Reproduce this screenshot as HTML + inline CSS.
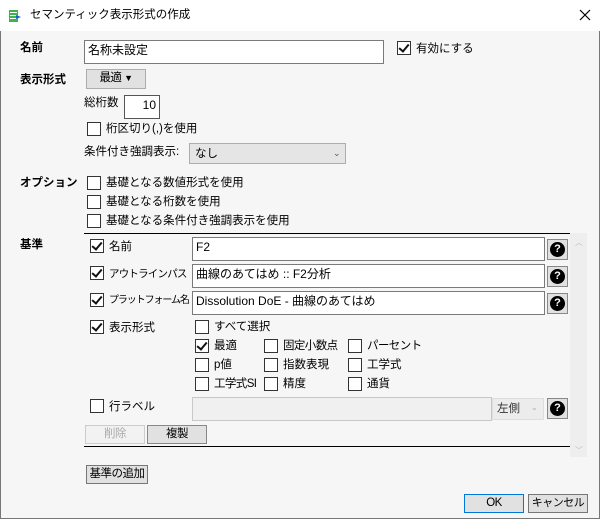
<!DOCTYPE html>
<html><head><meta charset="utf-8"><style>
*{box-sizing:border-box;margin:0;padding:0}
body{width:601px;height:521px;background:#fff;font-family:"Liberation Sans","Noto Sans CJK JP",sans-serif;font-size:11.5px;color:#000;position:relative;overflow:hidden}
.a{position:absolute;white-space:nowrap;line-height:14px}
.n{letter-spacing:-0.6px}
.b{font-weight:bold}
.cb{position:absolute;width:14px;height:14px;border:1px solid #333;background:#fff}
.cb.k::after{content:"";position:absolute;left:3px;top:0px;width:4px;height:8px;border:solid #111;border-width:0 2px 2px 0;transform:rotate(40deg)}
.tb{position:absolute;background:#fff;border:1px solid #7a7a7a;height:24px;padding:1px 3px;line-height:16px;font-size:12px;white-space:nowrap}
.btn{position:absolute;background:#e1e1e1;border:1px solid #adadad;text-align:center;line-height:17px;white-space:nowrap;letter-spacing:-0.5px}
.help{position:absolute;width:21px;height:21px;background:#e1e1e1;border:1px solid #888}
.help::after{content:"?";position:absolute;left:2px;top:2px;width:15px;height:15px;border-radius:50%;background:#000;color:#fff;font-weight:bold;font-size:11px;line-height:15px;text-align:center}
</style></head><body>
<div style="position:absolute;left:0;top:0;width:600px;height:519px;border:1px solid #777;border-top:none;background:#f6f6f6"></div>
<div style="position:absolute;left:0;top:0;width:600px;height:31px;background:#fff"></div>
<svg class="a" style="left:8px;top:9px" width="14" height="14"><rect x="1" y="1" width="9" height="12" fill="#3bb54a"/><rect x="2" y="3" width="7" height="1" fill="#fff"/><rect x="2" y="6" width="7" height="1" fill="#fff"/><rect x="2" y="9" width="7" height="1" fill="#fff"/><path d="M8 6 L13 8 L8 10Z" fill="#1a5fd0"/></svg>
<div class="a" style="left:30px;top:8px">セマンティック表示形式の作成</div>
<svg class="a" style="left:579px;top:9px" width="12" height="12"><path d="M1 1L11 11M11 1L1 11" stroke="#000" stroke-width="1.2"/></svg>

<div class="a b" style="left:20px;top:41px">名前</div>
<div class="tb" style="left:84px;top:40px;width:300px;">名称未設定</div>
<div class="cb k" style="left:397px;top:41px"></div>
<div class="a" style="left:416px;top:42px">有効にする</div>

<div class="a b" style="left:20px;top:73px">表示形式</div>
<div class="btn" style="left:86px;top:69px;width:60px;height:20px">最適 <span style="font-size:9px">▼</span></div>
<div class="a" style="left:84px;top:96px">総桁数</div>
<div class="tb" style="left:124px;top:95px;width:36px;text-align:right;font-size:12px;border-color:#555">10</div>
<div class="cb" style="left:87px;top:122px"></div>
<div class="a" style="left:106px;top:122px">桁区切り(,)を使用</div>
<div class="a" style="left:84px;top:145px">条件付き強調表示:</div>
<div style="position:absolute;left:189px;top:143px;width:157px;height:21px;background:#e5e5e5;border:1px solid #adadad"></div>
<div class="a" style="left:195px;top:147px">なし</div>
<div class="a" style="left:333px;top:146px;font-size:9px;color:#555">⌄</div>

<div class="a b" style="left:20px;top:176px">オプション</div>
<div class="cb" style="left:87px;top:176px"></div><div class="a" style="left:106px;top:176px">基礎となる数値形式を使用</div>
<div class="cb" style="left:87px;top:195px"></div><div class="a" style="left:106px;top:195px">基礎となる桁数を使用</div>
<div class="cb" style="left:87px;top:214px"></div><div class="a" style="left:106px;top:214px">基礎となる条件付き強調表示を使用</div>

<div style="position:absolute;left:84px;top:233px;width:486px;height:1px;background:#000"></div>
<div style="position:absolute;left:570px;top:233px;width:17px;height:224px;background:#eee"></div>
<div class="a" style="left:575px;top:236px;font-size:8px;color:#bbb">︿</div>
<div class="a" style="left:575px;top:444px;font-size:8px;color:#bbb">﹀</div>

<div class="a b" style="left:20px;top:238px">基準</div>
<div class="cb k" style="left:90px;top:239px"></div><div class="a" style="left:109px;top:240px">名前</div>
<div class="tb" style="left:192px;top:237px;width:353px">F2</div><div class="help" style="left:547px;top:239px"></div>
<div class="cb k" style="left:90px;top:266px"></div><div class="a" style="left:109px;top:267px;font-size:10.5px;letter-spacing:-0.8px">アウトラインパス</div>
<div class="tb" style="left:192px;top:264px;width:353px">曲線のあてはめ :: F2分析</div><div class="help" style="left:547px;top:266px"></div>
<div class="cb k" style="left:90px;top:293px"></div><div class="a" style="left:109px;top:294px;font-size:10px;letter-spacing:-1.1px">プラットフォーム名</div>
<div class="tb" style="left:192px;top:291px;width:353px">Dissolution DoE - 曲線のあてはめ</div><div class="help" style="left:547px;top:293px"></div>
<div class="cb k" style="left:90px;top:320px"></div><div class="a" style="left:109px;top:321px">表示形式</div>

<div class="cb" style="left:195px;top:320px"></div><div class="a" style="left:214px;top:320px">すべて選択</div>
<div class="cb k" style="left:195px;top:339px"></div><div class="a" style="left:214px;top:339px">最適</div>
<div class="cb" style="left:264px;top:339px"></div><div class="a n" style="left:283px;top:339px">固定小数点</div>
<div class="cb" style="left:348px;top:339px"></div><div class="a n" style="left:367px;top:339px">パーセント</div>
<div class="cb" style="left:195px;top:358px"></div><div class="a" style="left:214px;top:358px">p値</div>
<div class="cb" style="left:264px;top:358px"></div><div class="a" style="left:283px;top:358px">指数表現</div>
<div class="cb" style="left:348px;top:358px"></div><div class="a" style="left:367px;top:358px">工学式</div>
<div class="cb" style="left:195px;top:377px"></div><div class="a n" style="left:214px;top:377px">工学式SI</div>
<div class="cb" style="left:264px;top:377px"></div><div class="a" style="left:283px;top:377px">精度</div>
<div class="cb" style="left:348px;top:377px"></div><div class="a" style="left:367px;top:377px">通貨</div>

<div class="cb" style="left:90px;top:399px"></div><div class="a" style="left:109px;top:400px">行ラベル</div>
<div style="position:absolute;left:192px;top:397px;width:300px;height:24px;background:#f0f0f0;border:1px solid #c8c8c8"></div>
<div style="position:absolute;left:492px;top:398px;width:52px;height:22px;background:#ececec;border:1px solid #ddd"></div>
<div class="a" style="left:497px;top:402px;color:#333">左側</div><div class="a" style="left:531px;top:401px;font-size:8px;color:#aaa">⌄</div>
<div class="help" style="left:547px;top:398px"></div>
<div class="btn" style="left:85px;top:425px;width:60px;height:19px;color:#aaa;border-color:#ccc;background:#f2f2f2">削除</div>
<div class="btn" style="left:147px;top:425px;width:60px;height:19px;border-color:#888">複製</div>
<div style="position:absolute;left:84px;top:446px;width:486px;height:1px;background:#000"></div>

<div class="btn" style="left:86px;top:465px;width:62px;height:19px;border-color:#777">基準の追加</div>
<div class="btn" style="left:464px;top:494px;width:60px;height:19px;border-color:#0078d7">OK</div>
<div class="btn" style="left:528px;top:494px;width:60px;height:19px;border-color:#777;font-size:11px">キャンセル</div>
</body></html>
